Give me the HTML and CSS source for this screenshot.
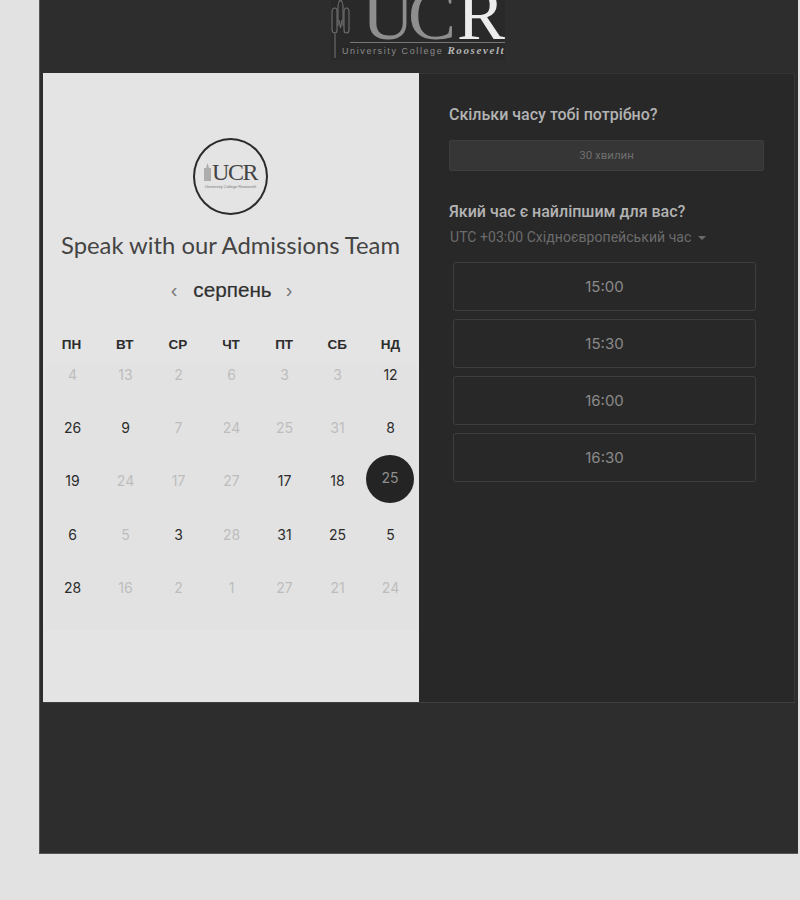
FILE: index.html
```html
<!DOCTYPE html>
<html>
    <head>
        <title>Speak with our Admissions Team</title>
        <link rel="stylesheet" href="styles.css">
    </head>

    <body>
        <div class="page">
            <div class="top_bar">
                <div class="logo">
                    <svg class="tower" width="19" height="60" viewBox="0 0 19 60" fill="none" stroke="#6f6f6f" stroke-width="1.1">
                        <path d="M4 58V34"/>
                        <path d="M1 12c0-2 1-4 3-4s2 2 2 4v18c0 2-1 3-2 3s-3-1-3-3z"/>
                        <path d="M7 26V6c0-3 1-5 2.500-6C11 1 12 3 12 6v20"/>
                        <path d="M8 20l1.500 8 1.500-8"/>
                        <path d="M13 12c0-2 1-4 2.500-4S18 10 18 12v18c0 2-1 3-2.500 3S13 32 13 30z"/>
                    </svg>
                    <div class="logo_text">
                        <div class="logo_mark"><span class="logo_uc">UC</span><span class="logo_r">R</span></div>
                        <div class="logo_name">University College <span class="logo_script">Roosevelt</span></div>
                    </div>
                </div>
            </div>

            <div class="card">
                <div class="left_panel">
                    <div class="badge">
                        <div class="badge_mark">
                            <svg width="7" height="18" viewBox="0 0 7 18"><path d="M3.500 0L5 5h2v13H0V5h2z" fill="#adadad"/></svg>
                            <span>UCR</span>
                        </div>
                        <div class="badge_name">University College Roosevelt</div>
                    </div>
                    <h1 class="title">Speak with our Admissions Team</h1>
                    <div class="month_row">
                        <span class="arrow prev">&#8249;</span>
                        <span class="month">серпень</span>
                        <span class="arrow">&#8250;</span>
                    </div>

                    <div class="week_days">
                        <div>ПН</div><div>ВТ</div><div>СР</div><div>ЧТ</div><div>ПТ</div><div>СБ</div><div>НД</div>
                    </div>
                    <div class="days">
                        <div class="day off">4</div><div class="day off">13</div><div class="day off">2</div><div class="day off">6</div><div class="day off">3</div><div class="day off">3</div><div class="day">12</div>
                        <div class="day">26</div><div class="day">9</div><div class="day off">7</div><div class="day off">24</div><div class="day off">25</div><div class="day off">31</div><div class="day">8</div>
                        <div class="day">19</div><div class="day off">24</div><div class="day off">17</div><div class="day off">27</div><div class="day">17</div><div class="day">18</div><div class="day"><span class="selected">25</span></div>
                        <div class="day">6</div><div class="day off">5</div><div class="day">3</div><div class="day off">28</div><div class="day">31</div><div class="day">25</div><div class="day">5</div>
                        <div class="day">28</div><div class="day off">16</div><div class="day off">2</div><div class="day off">1</div><div class="day off">27</div><div class="day off">21</div><div class="day off">24</div>
                    </div>
                </div>

                <div class="right_panel">
                    <h2 class="question">Скільки часу тобі потрібно?</h2>
                    <div class="duration">30 хвилин</div>
                    <h2 class="question second">Який час є найліпшим для вас?</h2>
                    <div class="zone">UTC +03:00 Східноєвропейський час <span class="caret"></span></div>
                    <div class="times">
                        <div class="time">15:00</div>
                        <div class="time">15:30</div>
                        <div class="time">16:00</div>
                        <div class="time">16:30</div>
                    </div>
                </div>
            </div>
        </div>
    </body>
</html>
```

FILE: styles.css
```css
html, body {
    margin: 0;
    height: 900px;
    overflow: hidden;
    background-color: #e2e2e2;
    font-family: "Liberation Sans", Arial, sans-serif;
}

.page {
    box-sizing: border-box;
    width: 759px;
    height: 854px;
    margin-left: 39px;
    padding: 0 3px 0 3px;
    background-color: #2d2d2d;
    border-left: 1px solid #555;
    border-bottom: 1px solid #555;
}

/* top logo, cut off by the window like in the capture */
.top_bar {
    height: 73px;
    display: flex;
    justify-content: center;
}

.logo {
    display: flex;
    align-items: flex-start;
    height: 60px;
    margin-left: -2px;
    background-color: #292929;
}

.tower {
    flex-shrink: 0;
}

.logo_text {
    width: 155px;
}

.logo_mark {
    height: 43px;
    padding-left: 12px;
    box-sizing: border-box;
    line-height: 30px;
    font-family: "Liberation Serif", serif;
    font-size: 72px;
    letter-spacing: -6px;
    border-bottom: 1px solid #777;
    white-space: nowrap;
}

.logo_uc {
    color: #8e8e8e;
}

.logo_r {
    color: #ececec;
    letter-spacing: 0;
    margin-left: 7px;
}

.logo_name {
    margin: 1px 0 0 -8px;
    font-size: 9px;
    letter-spacing: 1.600px;
    color: #8b8b8b;
    white-space: nowrap;
}

.logo_script {
    font-family: "Liberation Serif", serif;
    font-size: 11px;
    font-style: italic;
    font-weight: bold;
    color: #b5b5b5;
}

.card {
    display: flex;
    height: 630px;
    box-sizing: border-box;
    border-bottom: 1px solid #3f3f3f;
}

.left_panel {
    box-sizing: border-box;
    width: 376px;
    padding: 65px 2px 0 3px;
    background-color: #e4e4e4;
    color: #2a2a2a;
}

.badge {
    box-sizing: border-box;
    width: 75px;
    height: 77px;
    margin: 0 0 0 147px;
    padding-top: 20px;
    border: 2.500px solid #2b2b2b;
    border-radius: 50%;
    text-align: center;
    color: #444;
}

.badge_mark {
    display: flex;
    justify-content: center;
    align-items: center;
    gap: 1px;
    font-family: "Liberation Serif", serif;
    font-size: 24px;
    line-height: 24px;
    letter-spacing: -1.500px;
}

.badge_name {
    font-size: 4px;
    line-height: 5px;
    color: #777;
    white-space: nowrap;
}

.title {
    margin: 15px 0 0;
    padding-right: 2px;
    font-family: Lato, sans-serif;
    font-size: 23.800px;
    font-weight: 400;
    line-height: 30px;
    text-align: center;
    color: #444;
}

.month_row {
    display: flex;
    justify-content: center;
    align-items: center;
    gap: 14px;
    height: 30px;
    margin-top: 15px;
}

.month {
    font-size: 20.700px;
    color: #303030;
    -webkit-text-stroke: 0.2px #303030;
}

.arrow {
    font-size: 20px;
    color: #777;
}

.prev {
    margin-right: 2px;
}

.week_days,
.days {
    display: grid;
    grid-template-columns: repeat(7, 1fr);
    text-align: center;
}

.week_days {
    margin: 30px 0 0 -1px;
    height: 30px;
    font-size: 13.500px;
    font-weight: bold;
    line-height: 20px;
    color: #2c2c2c;
}

.days {
    grid-auto-rows: 53.200px;
    height: 265px;
    background-color: #e2e2e2;
}

.day {
    font-family: Inter, sans-serif;
    font-size: 14px;
    line-height: 20px;
    color: #2b2b2b;
    position: relative;
}

.off {
    color: #bdbdbd;
}

.selected {
    position: absolute;
    top: -16px;
    left: 2px;
    width: 48px;
    height: 48px;
    border-radius: 50%;
    background-color: #242424;
    color: #8f8f8f;
    line-height: 46px;
}

.right_panel {
    flex: 1;
    box-sizing: border-box;
    padding: 32px 30px 0 30px;
    background-color: #282828;
    border-top: 1px solid #333;
    border-right: 1px solid #353535;
}

.question {
    margin: -1px 0 0;
    font-family: Roboto, sans-serif;
    font-size: 16px;
    font-weight: 500;
    line-height: 20px;
    color: #b3b3b3;
}

.second {
    margin-top: 31px;
}

.duration {
    height: 31px;
    margin-top: 15px;
    background-color: #363636;
    border: 1px solid #3d3d3d;
    border-radius: 2px;
    box-sizing: border-box;
    font-family: Roboto, sans-serif;
    font-size: 11.500px;
    line-height: 29px;
    text-align: center;
    color: #6f6f6f;
}

.zone {
    margin: 5px 0 0 1px;
    font-family: Roboto, sans-serif;
    font-size: 14px;
    letter-spacing: 0.050px;
    line-height: 20px;
    color: #6c6c6c;
}

.caret {
    display: inline-block;
    margin-left: 3px;
    vertical-align: 2px;
    border: 4px solid transparent;
    border-top-color: #6c6c6c;
    border-bottom: 0;
}

.times {
    display: flex;
    flex-direction: column;
    gap: 8px;
    width: 303px;
    margin: 15px 0 0 4px;
}

.time {
    box-sizing: border-box;
    height: 49px;
    border: 1px solid #3e3e3e;
    border-radius: 3px;
    font-family: Inter, sans-serif;
    font-size: 15px;
    line-height: 47px;
    text-align: center;
    color: #8a8a8a;
}
```
